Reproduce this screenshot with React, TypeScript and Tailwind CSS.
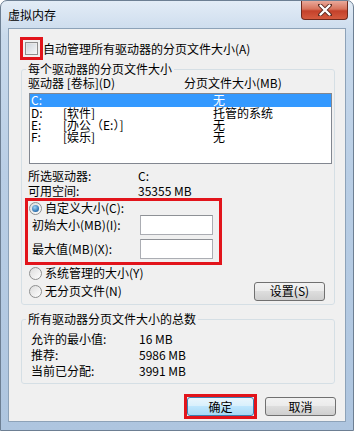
import React from "react";

const drives = [
  { letter: "C:", label: "", size: "无" },
  { letter: "D:", label: "[软件]", size: "托管的系统" },
  { letter: "E:", label: "[办公（E:）]", size: "无" },
  { letter: "F:", label: "[娱乐]", size: "无" },
];

function Radio({ checked }: { checked?: boolean }) {
  return (
    <span className="w-[13px] h-[13px] shrink-0 rounded-full border border-[#8e8f8f] bg-[linear-gradient(135deg,#dcdcdc,#ffffff)] flex items-center justify-center">
      {checked && (
        <span className="w-[7px] h-[7px] rounded-full bg-[radial-gradient(circle_at_40%_35%,#9fd3f7,#2a6fae_70%,#1b4f82)]" />
      )}
    </span>
  );
}

function Btn({ label, primary }: { label: string; primary?: boolean }) {
  return (
    <button
      className={`h-[19px] rounded-[3px] border text-[12px] leading-none flex items-center justify-center ${
        primary
          ? "w-[67px] border-[#3c7fb1] bg-[linear-gradient(#eaf6fd_0%,#d9f0fc_45%,#bee6fd_50%,#a7d9f5_100%)]"
          : "w-[71px] border-[#707070] bg-[linear-gradient(#f2f2f2_0%,#ebebeb_45%,#dddddd_50%,#cfcfcf_100%)]"
      }`}
    >
      {label}
    </button>
  );
}

export default function App() {
  return (
    <div className="w-[354px] h-[431px] flex flex-col rounded-t-[7px] border border-[#6d7f93] bg-[linear-gradient(180deg,#e3ecf6_0%,#c9daec_8%,#b9cee5_40%,#aec5df_100%)] text-black font-['Noto_Sans_CJK_SC','Noto_Sans',sans-serif] text-[12px] overflow-hidden">
      {/* 标题栏 */}
      <div className="h-[27px] flex justify-between items-start pl-[7px]">
        <span className="mt-[6px] text-[12px] leading-[16px]">虚拟内存</span>
        <div className="mr-[5px] w-[47px] h-[19px] rounded-b-[4px] border border-t-0 border-[#6e2a1e] bg-[linear-gradient(#e9a99a_0%,#d7735c_45%,#c4412a_55%,#d55b3f_100%)] flex items-center justify-center">
          <svg width="14" height="12" viewBox="0 0 14 12">
            <path d="M2 1 L12 11 M12 1 L2 11" stroke="#5a2a20" strokeWidth="4" strokeLinecap="round" />
            <path d="M2.5 1.5 L11.5 10.5 M11.5 1.5 L2.5 10.5" stroke="#ffffff" strokeWidth="2.4" strokeLinecap="round" />
          </svg>
        </div>
      </div>

      {/* 客户区 */}
      <div className="mx-[7px] mb-[8px] flex-1 border border-[#8da2b8] bg-[#f0f0f0] flex flex-col">
        <div className="mt-[8px] ml-[11px] flex items-center">
          <span className="border-[3px] border-[#e2141b] p-[2px] flex">
            <span className="w-[13px] h-[13px] border border-[#8e8f8f] bg-[linear-gradient(135deg,#dedede,#f7f7f7)] flex items-center justify-center">
              <span className="w-[9px] h-[9px] bg-[linear-gradient(135deg,#cfd6dd,#f3f5f7)]" />
            </span>
          </span>
          <span className="leading-[16px]">自动管理所有驱动器的分页文件大小(A)</span>
        </div>

        <fieldset className="mt-[1px] ml-[12px] mr-[10px] border border-[#d5dfe5] rounded-[3px] pb-[4px]">
          <legend className="ml-[4px] px-[2px] leading-[16px]">每个驱动器的分页文件大小</legend>
          <div className="flex pl-[6px] leading-[12px]">
            <span className="w-[156px]">驱动器 [卷标](D)</span>
            <span>分页文件大小(MB)</span>
          </div>
          <div className="mt-[4px] ml-[7px] mr-[2px] h-[71px] border border-[#828790] bg-white leading-[12px]">
            {drives.map((d, i) => (
              <div
                key={d.letter}
                className={`flex pl-[1px] ${i === 0 ? "h-[13px] bg-[#3399ff] text-white" : "h-[12px]"}`}
              >
                <span className="w-[32px]">{d.letter}</span>
                <span className="w-[150px]">{d.label}</span>
                <span>{d.size}</span>
              </div>
            ))}
          </div>

          <div className="mt-[4px] pl-[6px] leading-[15px]">
            <div className="flex">
              <span className="w-[110px]">所选驱动器:</span>
              <span>C:</span>
            </div>
            <div className="flex">
              <span className="w-[110px]">可用空间:</span>
              <span>35355 MB</span>
            </div>
          </div>

          <div className="ml-[3px] w-[197px] border-[3px] border-[#e2141b] pb-[3px]">
            <div className="h-[14px] flex items-center gap-[3px] pl-[1px]">
              <Radio checked />
              <span>自定义大小(C):</span>
            </div>
            <div className="h-[20px] flex items-center pl-[4px]">
              <span className="w-[108px]">初始大小(MB)(I):</span>
              <span className="w-[73px] h-[20px] border border-[#abadb3] border-t-[#8e9196] bg-white" />
            </div>
            <div className="mt-[4px] h-[20px] flex items-center pl-[4px]">
              <span className="w-[108px]">最大值(MB)(X):</span>
              <span className="w-[73px] h-[20px] border border-[#abadb3] border-t-[#8e9196] bg-white" />
            </div>
          </div>

          <div className="mt-[1px] h-[14px] flex items-center gap-[3px] pl-[7px]">
            <Radio />
            <span>系统管理的大小(Y)</span>
          </div>
          <div className="mt-[2px] h-[18px] flex items-center justify-between pl-[7px] pr-[9px]">
            <div className="flex items-center gap-[3px]">
              <Radio />
              <span>无分页文件(N)</span>
            </div>
            <Btn label="设置(S)" />
          </div>
        </fieldset>

        <fieldset className="mt-[6px] ml-[12px] mr-[10px] border border-[#d5dfe5] rounded-[3px] pb-[4px]">
          <legend className="ml-[4px] px-[2px] leading-[16px]">所有驱动器分页文件大小的总数</legend>
          <div className="mt-[4px] pl-[9px] leading-[16px]">
            <div className="flex">
              <span className="w-[108px]">允许的最小值:</span>
              <span>16 MB</span>
            </div>
            <div className="flex">
              <span className="w-[108px]">推荐:</span>
              <span>5986 MB</span>
            </div>
            <div className="flex">
              <span className="w-[108px]">当前已分配:</span>
              <span>3991 MB</span>
            </div>
          </div>
        </fieldset>

        <div className="mt-[10px] mr-[9px] flex justify-end items-center gap-[8px]">
          <span className="border-[3px] border-[#e2141b] flex">
            <Btn label="确定" primary />
          </span>
          <Btn label="取消" />
        </div>
      </div>
    </div>
  );
}
